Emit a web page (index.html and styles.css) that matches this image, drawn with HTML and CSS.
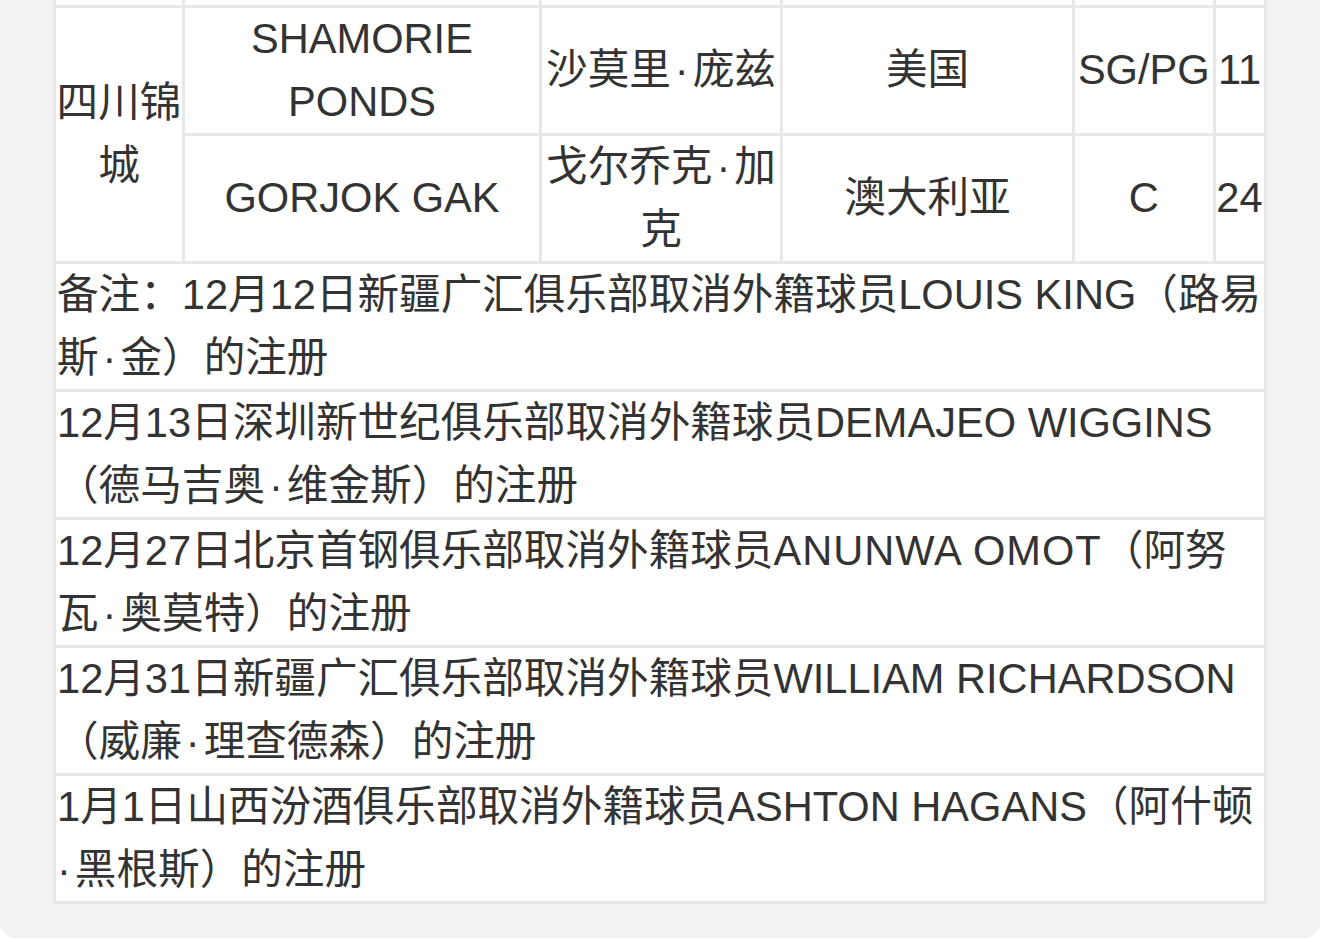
FILE: index.html
```html
<!DOCTYPE html>
<html lang="zh-CN">
<head>
<meta charset="utf-8">
<title>外籍球员注册</title>
<link rel="stylesheet" href="styles.css">
</head>
<body>
<div class="panel">
  <table class="roster">
    <colgroup>
      <col class="c1"><col class="c2"><col class="c3"><col class="c4"><col class="c5"><col class="c6">
    </colgroup>
    <tbody>
      <tr class="cut"><td></td><td></td><td></td><td></td><td></td><td></td></tr>
      <tr>
        <td rowspan="2">四川锦<br>城</td>
        <td>SHAMORIE<br>PONDS</td>
        <td>沙莫里<span class="dot">·</span>庞兹</td>
        <td>美国</td>
        <td>SG/PG</td>
        <td>11</td>
      </tr>
      <tr>
        <td>GORJOK GAK</td>
        <td>戈尔乔克<span class="dot">·</span>加<br>克</td>
        <td>澳大利亚</td>
        <td>C</td>
        <td>24</td>
      </tr>
      <tr><td class="note" colspan="6">备注：12月12日新疆广汇俱乐部取消外籍球员LOUIS KING（路易<br>斯<span class="dot">·</span>金）的注册</td></tr>
      <tr><td class="note" colspan="6">12月13日深圳新世纪俱乐部取消外籍球员DEMAJEO WIGGINS<br>（德马吉奥<span class="dot">·</span>维金斯）的注册</td></tr>
      <tr><td class="note" colspan="6">12月27日北京首钢俱乐部取消外籍球员<span class="wide">ANUNWA OMOT</span>（阿努<br>瓦<span class="dot">·</span>奥莫特）的注册</td></tr>
      <tr><td class="note" colspan="6">12月31日新疆广汇俱乐部取消外籍球员WILLIAM RICHARDSON<br>（威廉<span class="dot">·</span>理查德森）的注册</td></tr>
      <tr><td class="note" colspan="6">1月1日山西汾酒俱乐部取消外籍球员ASHTON HAGANS（阿什顿<br><span class="dot lead">·</span>黑根斯）的注册</td></tr>
    </tbody>
  </table>
</div>
</body>
</html>
```
FILE: styles.css
```css
html, body {
  margin: 0;
  padding: 0;
  background: #ffffff;
}

body {
  font-family: "Liberation Sans", "Noto Sans CJK SC", sans-serif;
  color: #333333;
}

.panel {
  background: #f2f2f2;
  padding: 0 54px 37px 53px;
  height: 938px;
  box-sizing: border-box;
  border-radius: 0 0 16px 16px;
}

.roster {
  width: 1213px;
  border-collapse: collapse;
  table-layout: fixed;
  background: #ffffff;
  font-size: 41.6px;
  line-height: 62.5px;
}

.c1 { width: 129px; }
.c2 { width: 357px; }
.c3 { width: 241px; }
.c4 { width: 292px; }
.c5 { width: 140.5px; }
.c6 { width: 51px; }

.roster td {
  border: 3px solid #e8e8e8;
  padding: 0;
  text-align: center;
  vertical-align: middle;
}

.roster .cut td {
  height: 5px;
  border-top: 0;
  line-height: 0;
  font-size: 0;
}

.roster td.note {
  text-align: left;
  white-space: nowrap;
  padding-left: 1px;
}

.dot {
  margin: 0 4px;
}

.dot.lead {
  margin-left: 0;
}

.wide {
  letter-spacing: 1px;
}
```
